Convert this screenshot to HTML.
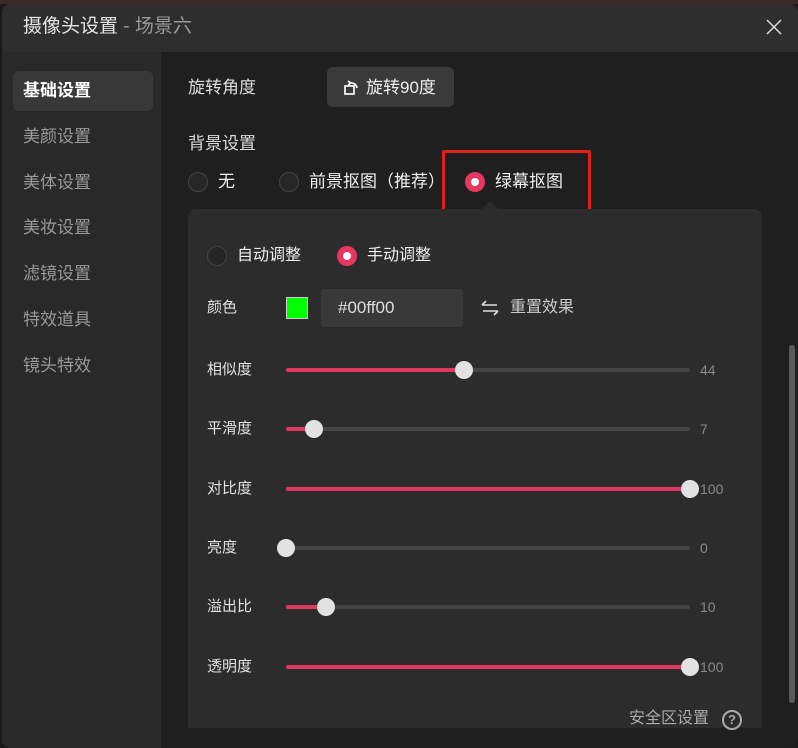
<!DOCTYPE html><html><head><meta charset="utf-8"><style>
*{margin:0;padding:0;box-sizing:border-box}
body{width:798px;height:748px;background:#1a1a1a;font-family:"Liberation Sans","Noto Sans CJK SC",sans-serif;overflow:hidden;position:relative;color:#ddd}
.a{position:absolute}
.win{left:2px;top:4px;width:796px;height:744px;background:#1f1f1f;border-radius:8px;overflow:hidden}
.title{left:0;top:0;width:796px;height:48px;background:#2e2e2e}
.side{left:0;top:48px;width:159px;height:700px;background:#292929}
.t{font-size:17px;white-space:nowrap;line-height:20px}
.radio{width:20px;height:20px;border-radius:50%;border:1px solid #444;background:#262626}
.radio.on{background:#e8365f;border:none}
.radio.on:after{content:"";position:absolute;left:6px;top:6px;width:8px;height:8px;border-radius:50%;background:#fff}
.track{height:4px;border-radius:2px;background:#444;left:286px;width:404px}
.fill{height:4px;border-radius:2px;background:#e0385e;left:286px}
.knob{width:18px;height:18px;border-radius:50%;background:#e2e2e2}
.val{font-size:14px;color:#8a8a8a;left:700px;line-height:16px}
.lab{font-size:15px;color:#e0e0e0;left:207px;line-height:18px}
</style></head><body>
<div class="a" style="left:0;top:0;width:798px;height:4px;background:#3a2a2a"></div>
<div class="a win">
<div class="a title"></div>
<div class="a t" style="left:21px;top:13px;font-size:19px;color:#e6e6e6">摄像头设置 <span style="color:#999">- 场景六</span></div>
<div class="a side"></div>
</div>
<svg class="a" style="left:766px;top:19px" width="16" height="16" viewBox="0 0 16 16" stroke="#ddd" stroke-width="1.5"><path d="M1 1L15 15M15 1L1 15"/></svg>
<div class="a" style="left:13px;top:71px;width:140px;height:40px;background:#383838;border-radius:6px"></div>
<div class="a t" style="left:23px;top:81px;color:#fff;font-weight:bold">基础设置</div>
<div class="a t" style="left:23px;top:127px;color:#999">美颜设置</div>
<div class="a t" style="left:23px;top:173px;color:#999">美体设置</div>
<div class="a t" style="left:23px;top:218px;color:#999">美妆设置</div>
<div class="a t" style="left:23px;top:264px;color:#999">滤镜设置</div>
<div class="a t" style="left:23px;top:310px;color:#999">特效道具</div>
<div class="a t" style="left:23px;top:356px;color:#999">镜头特效</div>

<div class="a t" style="left:188px;top:78px;color:#ddd">旋转角度</div>
<div class="a" style="left:327px;top:67px;width:127px;height:40px;background:#3a3a3a;border-radius:6px"></div>
<svg class="a" style="left:342px;top:78px" width="18" height="18" viewBox="0 0 18 18" fill="none" stroke="#eee" stroke-width="1.8"><rect x="3" y="8" width="9" height="8"/><path d="M8 5 A6 6 0 0 1 15 10"/><path d="M6 3 L8.5 5 L6 7.5"/></svg>
<div class="a t" style="left:366px;top:78px;color:#eee">旋转90度</div>

<div class="a t" style="left:188px;top:134px;color:#ddd">背景设置</div>
<div class="a radio" style="left:188px;top:172px"></div>
<div class="a t" style="left:218px;top:172px;color:#eee">无</div>
<div class="a radio" style="left:279px;top:172px"></div>
<div class="a t" style="left:309px;top:172px;color:#eee">前景抠图（推荐）</div>
<div class="a radio on" style="left:465px;top:172px"></div>
<div class="a t" style="left:495px;top:172px;color:#eee">绿幕抠图</div>
<div class="a" style="left:442px;top:150px;width:149px;height:70px;border:3px solid #e0201a;border-radius:2px"></div>

<div class="a" style="left:188px;top:209px;width:574px;height:519px;background:#2c2c2c;border-radius:8px 8px 0 0"></div>
<div class="a" style="left:482px;top:201px;width:0;height:0;border-left:8px solid transparent;border-right:8px solid transparent;border-bottom:8px solid #2c2c2c"></div>
<div class="a radio" style="left:207px;top:246px"></div>
<div class="a t" style="left:237px;top:246px;font-size:16px;color:#eee">自动调整</div>
<div class="a radio on" style="left:337px;top:246px"></div>
<div class="a t" style="left:367px;top:246px;font-size:16px;color:#eee">手动调整</div>
<div class="a lab" style="top:299px">颜色</div>
<div class="a" style="left:286px;top:297px;width:22px;height:22px;background:#00ff00;border:1px solid #ccc"></div>
<div class="a" style="left:321px;top:289px;width:142px;height:38px;background:#393939;border-radius:4px"></div>
<div class="a t" style="left:338px;top:298px;color:#ddd">#00ff00</div>
<svg class="a" style="left:481px;top:300px" width="18" height="16" viewBox="0 0 18 16" fill="none" stroke="#ddd" stroke-width="1.6"><path d="M1 5H16M1 5L5 1M17 11H2M17 11L13 15"/></svg>
<div class="a t" style="left:510px;top:298px;font-size:16px;color:#ccc">重置效果</div>

<div class="a lab" style="top:361px">相似度</div><div class="a track" style="top:368px"></div><div class="a fill" style="top:368px;width:178px"></div><div class="a knob" style="left:455px;top:361px"></div><div class="a val" style="top:362px">44</div>
<div class="a lab" style="top:420px">平滑度</div><div class="a track" style="top:427px"></div><div class="a fill" style="top:427px;width:28px"></div><div class="a knob" style="left:305px;top:420px"></div><div class="a val" style="top:421px">7</div>
<div class="a lab" style="top:480px">对比度</div><div class="a track" style="top:487px"></div><div class="a fill" style="top:487px;width:404px"></div><div class="a knob" style="left:681px;top:480px"></div><div class="a val" style="top:481px">100</div>
<div class="a lab" style="top:539px">亮度</div><div class="a track" style="top:546px"></div><div class="a knob" style="left:277px;top:539px"></div><div class="a val" style="top:540px">0</div>
<div class="a lab" style="top:598px">溢出比</div><div class="a track" style="top:605px"></div><div class="a fill" style="top:605px;width:40px"></div><div class="a knob" style="left:317px;top:598px"></div><div class="a val" style="top:599px">10</div>
<div class="a lab" style="top:658px">透明度</div><div class="a track" style="top:665px"></div><div class="a fill" style="top:665px;width:404px"></div><div class="a knob" style="left:681px;top:658px"></div><div class="a val" style="top:659px">100</div>
<div class="a t" style="left:629px;top:709px;font-size:16px;color:#aaa">安全区设置</div>
<div class="a" style="left:722px;top:710px;width:20px;height:20px;border:2px solid #aaa;border-radius:50%;font-size:13px;color:#aaa;text-align:center;line-height:16px;font-weight:bold">?</div>
<div class="a" style="left:789px;top:345px;width:6px;height:358px;background:#5a5a5a;border-radius:3px"></div>
</body></html>
